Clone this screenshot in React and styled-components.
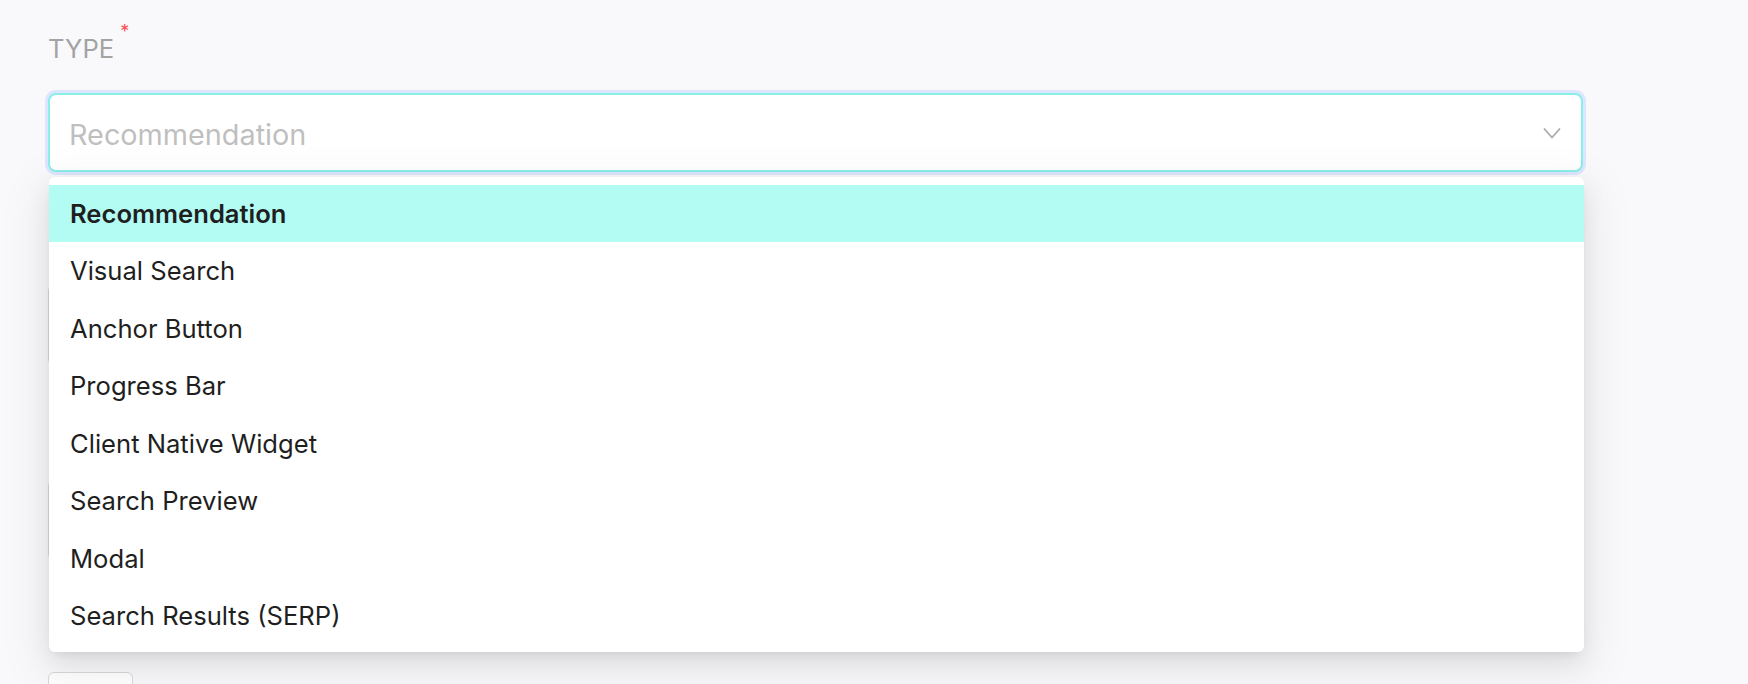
import styled, { createGlobalStyle } from "styled-components";

const GlobalStyle = createGlobalStyle`
  html,
  body {
    margin: 0;
    background: #f9f9fb;
    overflow: hidden;
    font-family: Inter, "Liberation Sans", sans-serif;
  }
`;

const Page = styled.div`
  padding: 31px 165px 0 48px;
`;

const FieldGroup = styled.div`
  margin-bottom: 49px;
`;

const Label = styled.label`
  display: block;
  height: 36px;
  font-size: 25.6px;
  line-height: 36px;
  color: #a3a3a3;
  margin-bottom: 26px;
`;

const Required = styled.span`
  display: inline-block;
  vertical-align: top;
  position: relative;
  top: -8px;
  margin-left: 6px;
  font-size: 18px;
  line-height: 1;
  color: #ff4d4f;
`;

const SelectWrap = styled.div`
  position: relative;
`;

const Trigger = styled.div`
  display: flex;
  align-items: center;
  justify-content: space-between;
  box-sizing: border-box;
  height: 79px;
  padding: 0 20px 0 19px;
  background: #fff;
  border: 2px solid #8aefe8;
  border-radius: 8px;
  box-shadow: 0 0 0 3px #dde6fe;
`;

const Placeholder = styled.span`
  margin-top: 4px;
  font-size: 28.8px;
  color: #bfbfbf;
`;

const Menu = styled.ul`
  position: absolute;
  z-index: 10;
  top: calc(100% + 5px);
  left: 1px;
  right: -1px;
  margin: 0;
  padding: 7.5px 0;
  list-style: none;
  background: #fff;
  border-radius: 6px;
  box-shadow: 0 10px 26px rgba(0, 0, 0, 0.08), 0 5px 10px -6px rgba(0, 0, 0, 0.12),
    0 14px 45px 13px rgba(0, 0, 0, 0.05);
`;

const Option = styled.li`
  display: flex;
  align-items: center;
  height: 57.5px;
  padding: 0 21px;
  font-size: 25.6px;
  color: #1f1f1f;
  font-weight: ${(p) => (p.$active ? 600 : 400)};
  background: ${(p) => (p.$active ? "#b3fcf4" : "transparent")};
`;

const Input = styled.div`
  box-sizing: border-box;
  height: 84px;
  background: #fff;
  border: 1.5px solid #d9d9d9;
  border-radius: 8px;
`;

const Actions = styled.div`
  padding-top: 61px;
`;

const Button = styled.button`
  width: 85px;
  height: 48px;
  background: #fff;
  border: 1.5px solid #d9d9d9;
  border-radius: 6px;
`;

const types = [
  "Recommendation",
  "Visual Search",
  "Anchor Button",
  "Progress Bar",
  "Client Native Widget",
  "Search Preview",
  "Modal",
  "Search Results (SERP)",
];

function Chevron() {
  return (
    <svg width="18" height="12" viewBox="0 0 18 12" fill="none">
      <polyline points="1,1.5 9,10.5 17,1.5" stroke="#ababab" strokeWidth="1.8" />
    </svg>
  );
}

function App() {
  return (
    <Page>
      <GlobalStyle />
      <FieldGroup>
        <Label>
          TYPE<Required>*</Required>
        </Label>
        <SelectWrap>
          <Trigger>
            <Placeholder>Recommendation</Placeholder>
            <Chevron />
          </Trigger>
          <Menu>
            {types.map((t, i) => (
              <Option key={t} $active={i === 0}>
                {t}
              </Option>
            ))}
          </Menu>
        </SelectWrap>
      </FieldGroup>

      <FieldGroup>
        <Label />
        <Input />
      </FieldGroup>

      <FieldGroup>
        <Label />
        <Input />
      </FieldGroup>

      <Actions>
        <Button aria-label="Save" />
      </Actions>
    </Page>
  );
}

export default App;
